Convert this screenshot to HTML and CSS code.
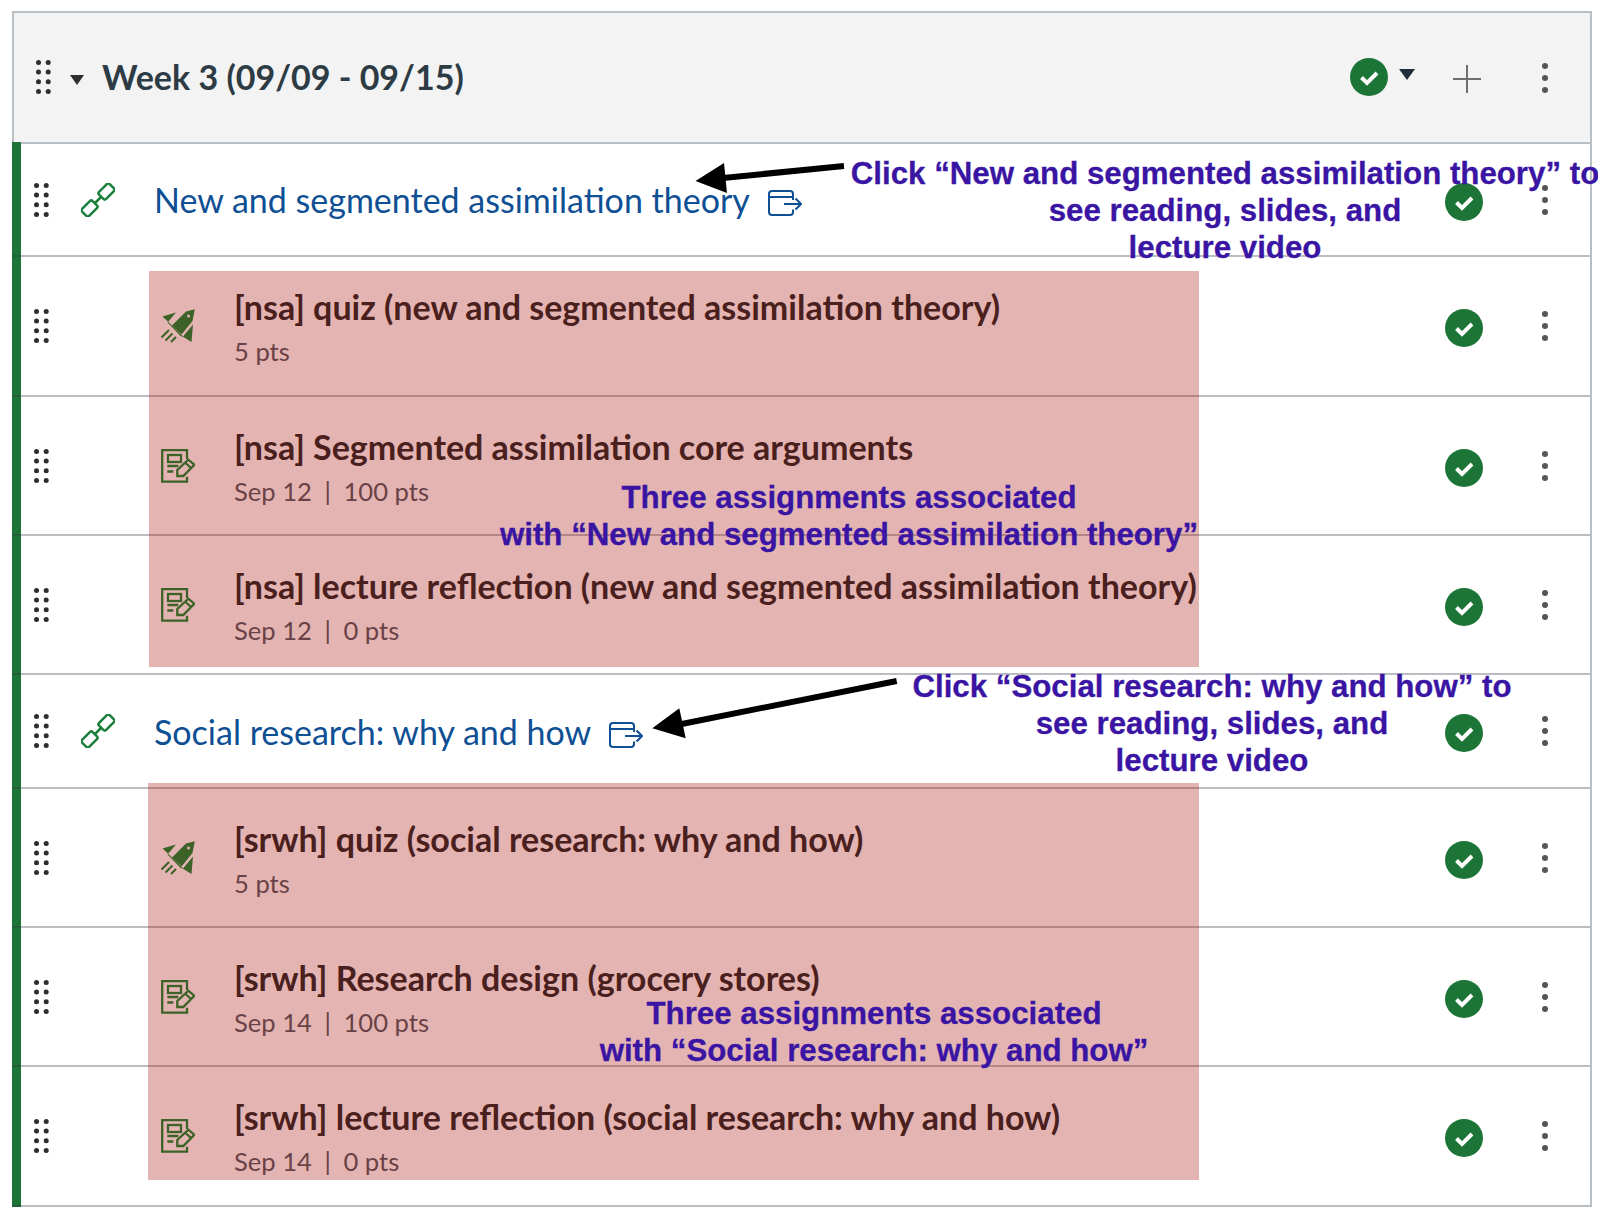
FILE: index.html
```html
<!DOCTYPE html>
<html lang="en">
<head>
<meta charset="utf-8">
<title>Week 3</title>
<link rel="stylesheet" href="styles.css">
</head>
<body>
<svg class="defs" width="0" height="0" aria-hidden="true">
  <defs>
    <symbol id="drag" viewBox="0 0 15 34"><g fill="currentColor"><circle cx="2.500" cy="2.500" r="2.500"/><circle cx="12.200" cy="2.500" r="2.500"/><circle cx="2.500" cy="12.100" r="2.500"/><circle cx="12.200" cy="12.100" r="2.500"/><circle cx="2.500" cy="21.800" r="2.500"/><circle cx="12.200" cy="21.800" r="2.500"/><circle cx="2.500" cy="31.500" r="2.500"/><circle cx="12.200" cy="31.500" r="2.500"/></g></symbol>
    <symbol id="kebab" viewBox="0 0 8 32"><g fill="currentColor"><circle cx="4" cy="4" r="3"/><circle cx="4" cy="16" r="3"/><circle cx="4" cy="28" r="3"/></g></symbol>
    <symbol id="check" viewBox="0 0 38 38"><circle cx="19" cy="19" r="19" fill="#1c7436"/><path d="M11.500 19.500l5.500 5.500 10-10" fill="none" stroke="#fff" stroke-width="4"/></symbol>
    <symbol id="link" viewBox="0 0 34 34"><g fill="none" stroke="currentColor" stroke-width="2.500"><rect x="-7.500" y="-5" width="15" height="10" rx="2" transform="translate(8.500 25.500) rotate(-45)"/><rect x="-7.500" y="-5" width="15" height="10" rx="2" transform="translate(25.500 8.500) rotate(-45)"/><path d="M13.500 20.500L20.500 13.500"/></g></symbol>
    <symbol id="ext" viewBox="0 0 34 26"><g fill="none" stroke="currentColor" stroke-width="2"><path d="M25 10V4a3 3 0 0 0-3-3H4a3 3 0 0 0-3 3v18a3 3 0 0 0 3 3h18a3 3 0 0 0 3-3v-2.500"/><path d="M1 7h24"/><path d="M16 14h17M27.500 8.500l5.500 5.500-5.500 5.500"/></g></symbol>
    <symbol id="quiz" viewBox="0 0 34 34"><g fill="currentColor"><path d="M33.800 .2L31.500 12 20.500 25.500 11 16.500 25 2.500z"/><path d="M1.500 7.500L15 3.500 6.500 13.500 9 16l10.500 11L22.500 28l8 5L32 15.500 22 27.500 9 14.500z"/></g><g fill="none" stroke="currentColor" stroke-width="2"><path d="M8 21L.5 28.500M11.500 24.500l-7 7M15 28l-5 5"/></g><circle cx="27.500" cy="7" r="1.500" fill="#fff"/></symbol>
    <symbol id="assign" viewBox="0 0 34 34"><g fill="none" stroke="currentColor" stroke-width="2.300"><path d="M26 10V1.200H1.200v31.500H26v-5"/><rect x="7" y="6" width="13" height="7"/><path d="M6.300 17h11M6.300 22.500h6"/><path d="M16.300 27V21L27.300 10.700l6 5L22.300 27zM24 13.500l6 5.500"/></g></symbol>
  </defs>
</svg>
<main class="module">
  <header class="module-head">
    <svg class="drag"><use href="#drag"/></svg>
    <span class="caret"></span>
    <h2 class="week">Week 3 (09/09 - 09/15)</h2>
    <div class="head-actions">
      <svg class="check"><use href="#check"/></svg>
      <span class="caret caret-dark"></span>
      <span class="plus"></span>
      <svg class="kebab"><use href="#kebab"/></svg>
    </div>
  </header>
  <ul class="list">
    <li class="row row-link">
      <svg class="drag"><use href="#drag"/></svg>
      <svg class="type type-link"><use href="#link"/></svg>
      <div class="body"><a class="link">New and segmented assimilation theory<svg class="ext"><use href="#ext"/></svg></a></div>
      <svg class="check"><use href="#check"/></svg>
      <svg class="kebab"><use href="#kebab"/></svg>
    </li>
    <li class="row row-tall">
      <svg class="drag"><use href="#drag"/></svg>
      <svg class="type"><use href="#quiz"/></svg>
      <div class="body"><div class="title">[nsa] quiz (new and segmented assimilation theory)</div><div class="meta">5 pts</div></div>
      <svg class="check"><use href="#check"/></svg>
      <svg class="kebab"><use href="#kebab"/></svg>
    </li>
    <li class="row">
      <svg class="drag"><use href="#drag"/></svg>
      <svg class="type"><use href="#assign"/></svg>
      <div class="body"><div class="title">[nsa] Segmented assimilation core arguments</div><div class="meta">Sep 12 <span class="sep">|</span> 100 pts</div></div>
      <svg class="check"><use href="#check"/></svg>
      <svg class="kebab"><use href="#kebab"/></svg>
    </li>
    <li class="row">
      <svg class="drag"><use href="#drag"/></svg>
      <svg class="type"><use href="#assign"/></svg>
      <div class="body"><div class="title">[nsa] lecture reflection (new and segmented assimilation theory)</div><div class="meta">Sep 12 <span class="sep">|</span> 0 pts</div></div>
      <svg class="check"><use href="#check"/></svg>
      <svg class="kebab"><use href="#kebab"/></svg>
    </li>
    <li class="row row-link row-link-b">
      <svg class="drag"><use href="#drag"/></svg>
      <svg class="type type-link"><use href="#link"/></svg>
      <div class="body"><a class="link">Social research: why and how<svg class="ext"><use href="#ext"/></svg></a></div>
      <svg class="check"><use href="#check"/></svg>
      <svg class="kebab"><use href="#kebab"/></svg>
    </li>
    <li class="row">
      <svg class="drag"><use href="#drag"/></svg>
      <svg class="type"><use href="#quiz"/></svg>
      <div class="body"><div class="title">[srwh] quiz (social research: why and how)</div><div class="meta">5 pts</div></div>
      <svg class="check"><use href="#check"/></svg>
      <svg class="kebab"><use href="#kebab"/></svg>
    </li>
    <li class="row">
      <svg class="drag"><use href="#drag"/></svg>
      <svg class="type"><use href="#assign"/></svg>
      <div class="body"><div class="title">[srwh] Research design (grocery stores)</div><div class="meta">Sep 14 <span class="sep">|</span> 100 pts</div></div>
      <svg class="check"><use href="#check"/></svg>
      <svg class="kebab"><use href="#kebab"/></svg>
    </li>
    <li class="row row-tall">
      <svg class="drag"><use href="#drag"/></svg>
      <svg class="type"><use href="#assign"/></svg>
      <div class="body"><div class="title">[srwh] lecture reflection (social research: why and how)</div><div class="meta">Sep 14 <span class="sep">|</span> 0 pts</div></div>
      <svg class="check"><use href="#check"/></svg>
      <svg class="kebab"><use href="#kebab"/></svg>
    </li>
  </ul>
</main>

<div class="shade shade-a"></div>
<div class="shade shade-b"></div>

<svg class="arrow arrow-a" viewBox="0 0 160 40"><path d="M149 6L28 18" stroke="#000" stroke-width="6" fill="none"/><path d="M.5 21L29 3l3 30z" fill="#000"/></svg>
<svg class="arrow arrow-b" viewBox="0 0 250 70"><path d="M244.700 4L29.700 47" stroke="#000" stroke-width="6" fill="none"/><path d="M.3 51.300L27.300 31.300l6.400 30z" fill="#000"/></svg>

<p class="note note-1">Click “New and segmented assimilation theory” to<br>see reading, slides, and<br>lecture video</p>
<p class="note note-2">Three assignments associated<br>with “New and segmented assimilation theory”</p>
<p class="note note-3">Click “Social research: why and how” to<br>see reading, slides, and<br>lecture video</p>
<p class="note note-4">Three assignments associated<br>with “Social research: why and how”</p>
</body>
</html>
```
FILE: styles.css
```css
* { box-sizing: border-box; }
html, body { margin: 0; padding: 0; background: #fff; }
body {
  width: 1598px;
  height: 1218px;
  position: relative;
  overflow: hidden;
  padding: 11px 6px 0 12px;
  font-family: Lato, "Liberation Sans", sans-serif;
  color: #2d3b45;
}
.defs { position: absolute; }
.module-head {
  display: flex;
  align-items: center;
  height: 133px;
  padding: 0 0 2px 22px;
  background: #f3f3f3;
  border: 2px solid #b9c0c5;
}
.drag { width: 15px; height: 34px; flex: none; color: #2d2d2d; }
.caret {
  width: 0; height: 0; flex: none;
  border-left: 7px solid transparent;
  border-right: 7px solid transparent;
  border-top: 10px solid #2d2d2d;
  margin: 6px 0 0 19px;
}
.week { margin: 0 0 0 18px; font-size: 34px; font-weight: 700; color: #2d3b45; line-height: 40px; }
.head-actions { margin-left: auto; display: flex; align-items: center; padding-right: 41px; }
.caret-dark { border-left-width: 8px; border-right-width: 8px; border-top-width: 11px; border-top-color: #1f2d3a; margin: -4px 0 0 11px; }
.plus { width: 28px; height: 28px; margin: 4px 0 0 38px; flex: none; background:
  linear-gradient(#6f6f6f,#6f6f6f) center/28px 2px no-repeat,
  linear-gradient(#6f6f6f,#6f6f6f) center/2px 28px no-repeat; }
.kebab { width: 8px; height: 32px; flex: none; color: #555; }
.plus + .kebab { margin: 2px 0 0 60px; }
.check { width: 38px; height: 38px; flex: none; }
.list {
  list-style: none;
  margin: -2px 0 0;
  padding: 2px 0 0;
  background: linear-gradient(#1c7436, #1c7436) left top/9px 100% no-repeat;
  border-right: 2px solid #b9c0c5;
  position: relative;
}
.row {
  display: flex;
  align-items: center;
  height: 139px;
  padding: 0 41px 0 22px;
  border-bottom: 2px solid rgba(45, 59, 69, .33);
}
.row-tall { height: 140px; }
.row-link { height: 113px; }
.row-link-b { height: 114px; }
.row > .check { margin: 4px 58px 0 0; }
.type { width: 34px; height: 34px; flex: none; color: #0f8a3a; margin-left: 112px; }
.row-link .type-link { margin-left: 32px; color: #1c7f3c; }
.body { flex: 1; min-width: 0; padding: 1px 0 0 39px; }
.row-link .body { padding: 1px 0 0 39px; }
.row-link-b .body { padding-top: 2px; }
.title { font-size: 34px; line-height: 40px; font-weight: 700; color: #232b2d; white-space: nowrap; }
.meta { font-size: 25.6px; line-height: 30px; margin-top: 9px; color: #4f5c66; white-space: nowrap; }
.sep { margin: 0 6px; }
.link { font-size: 34px; line-height: 40px; color: #0f4f94; white-space: nowrap; display: inline-flex; align-items: center; }
.ext { width: 34px; height: 26px; margin: 6px 0 0 18px; color: #0f4f94; }

.shade { position: absolute; background: rgba(165, 5, 0, .3); }
.shade-a { left: 149px; top: 271px; width: 1050px; height: 396px; }
.shade-b { left: 148px; top: 783px; width: 1051px; height: 397px; }

.arrow { position: absolute; }
.arrow-a { left: 695px; top: 160px; width: 160px; height: 40px; }
.arrow-b { left: 652px; top: 677px; width: 250px; height: 70px; }

.note {
  position: absolute;
  margin: 0;
  font-family: "Liberation Sans", Arial, sans-serif;
  font-weight: 700;
  font-size: 31.25px;
  line-height: 37px;
  color: #3a15a3;
  -webkit-text-stroke: .3px #3a15a3;
  text-align: center;
  white-space: nowrap;
  transform: translateX(-50%);
}
.note-1 { left: 1225px; top: 155px; }
.note-2 { left: 849px; top: 479px; }
.note-3 { left: 1212px; top: 668px; }
.note-4 { left: 874px; top: 995px; }
```
